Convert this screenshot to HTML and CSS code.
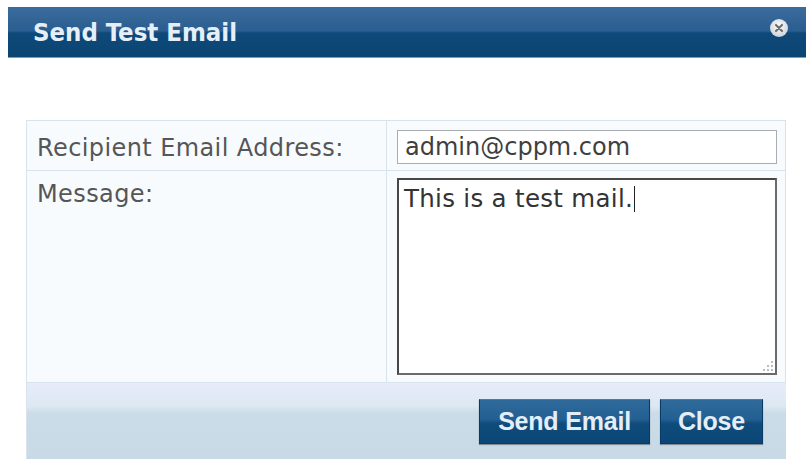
FILE: index.html
```html
<!DOCTYPE html>
<html>
<head>
    <meta charset="utf-8">
    <title>Send Test Email</title>
    <link rel="stylesheet" href="styles.css">
</head>
<body>
    <div class="dialog">
        <div class="dialog-title">
            <span class="dialog-caption">Send Test Email</span>
            <span class="dialog-close" title="Close">
                <svg width="20" height="20" viewBox="0 0 20 20">
                    <defs>
                        <radialGradient id="knob" cx="50%" cy="40%" r="60%">
                            <stop offset="0" stop-color="#ffffff" />
                            <stop offset="1" stop-color="#cdd3da" />
                        </radialGradient>
                    </defs>
                    <circle cx="10" cy="10" r="9" fill="url(#knob)" />
                    <path d="M7 7 L13 13 M13 7 L7 13" stroke="#707070" stroke-width="2.2" stroke-linecap="round" />
                </svg>
            </span>
        </div>
        <div class="dialog-body">
            <table class="form-table" cellspacing="0" cellpadding="0">
                <tr class="row-email">
                    <td class="form-label">Recipient Email Address:</td>
                    <td class="form-field"><div class="text-input">admin@cppm.com</div></td>
                </tr>
                <tr class="row-message">
                    <td class="form-label">Message:</td>
                    <td class="form-field">
                        <div class="text-area">This is a test mail.<span class="caret"></span>
                            <svg class="grip" width="12" height="12" viewBox="0 0 12 12">
                                <rect x="9" y="1" width="2" height="2" fill="#b9bcc0" />
                                <rect x="5" y="5" width="2" height="2" fill="#b9bcc0" />
                                <rect x="9" y="5" width="2" height="2" fill="#b9bcc0" />
                                <rect x="1" y="9" width="2" height="2" fill="#b9bcc0" />
                                <rect x="5" y="9" width="2" height="2" fill="#b9bcc0" />
                                <rect x="9" y="9" width="2" height="2" fill="#b9bcc0" />
                            </svg>
                        </div>
                    </td>
                </tr>
            </table>
            <div class="form-footer">
                <button type="button" class="btn-blue btn-send">Send Email</button>
                <button type="button" class="btn-blue">Close</button>
            </div>
        </div>
    </div>
</body>
</html>
```

FILE: styles.css
```css
body {
    margin: 7px 3px 0 8px;
    padding: 0;
    background-color: #ffffff;
}

.dialog {
    width: 798px;
}

/* title bar */
.dialog-title {
    display: flex;
    align-items: center;
    justify-content: space-between;
    height: 51px;
    padding: 0 18px 0 25px;
    box-sizing: border-box;
    background-image: linear-gradient(180deg, #3b6c9c 0, #2a5e90 48%, #0e4979 52%, #0a4573 100%);
    border-bottom: 1px solid #7d9dbb;
}

.dialog-caption {
    font-family: "DejaVu Sans Condensed", "DejaVu Sans", sans-serif;
    font-stretch: condensed;
    font-weight: bold;
    font-size: 25.5px;
    color: #e6eff8;
}

.dialog-close {
    display: flex;
    margin-top: -9px;
    margin-right: -1px;
}

/* form */
.dialog-body {
    padding: 62px 20px 0 18px;
}

.form-table {
    width: 100%;
    border-collapse: collapse;
    background-color: #f7fbfe;
}

.form-table td {
    border: 1px solid #d9e3ee;
    font-family: "DejaVu Sans", sans-serif;
    font-size: 24px;
}

.form-label {
    width: 349px;
    padding: 0 0 0 10px;
    color: #565656;
    letter-spacing: 0.4px;
}

.row-email td {
    height: 44px;
    padding-top: 2px;
}

.row-email .form-label {
    padding-top: 5px;
}

.row-message .form-label {
    vertical-align: top;
    padding-top: 9px;
}

.form-field {
    padding: 0 8px 0 10px;
}

.row-message .form-field {
    padding-top: 7px;
    padding-bottom: 7px;
}

.text-input {
    height: 32px;
    line-height: 32px;
    padding: 0 7px;
    border: 1px solid #a9adb2;
    background-color: #ffffff;
    color: #3f3f3f;
}

.text-area {
    position: relative;
    height: 185px;
    padding: 4px 5px;
    border: 2px solid #474747;
    border-right-color: #6b6b6b;
    border-bottom-color: #6b6b6b;
    background-color: #ffffff;
    color: #333333;
    font-size: 24.5px;
    line-height: 30px;
    letter-spacing: 0.3px;
}

.caret {
    display: inline-block;
    width: 1px;
    height: 26px;
    margin-left: 1px;
    vertical-align: -5px;
    background-color: #222222;
}

.grip {
    position: absolute;
    right: 1px;
    bottom: 1px;
}

/* button bar */
.form-footer {
    display: flex;
    justify-content: flex-end;
    gap: 10px;
    padding: 16px 23px 15px 0;
    background-image: linear-gradient(180deg, #e6ecf8 0, #dde8f3 30%, #cadce7 40%, #c8dae5 100%);
    border-left: 1px solid #d9e3ee;
}

.btn-blue {
    height: 45px;
    padding: 0 17px;
    border: 1px solid #0b3b63;
    border-top-color: #4b7aa6;
    background-image: linear-gradient(180deg, #2f6a9b 0, #235f92 45%, #0f4c7b 55%, #0b4776 100%);
    box-shadow: 0 1px 1px rgba(0,0,0,0.35);
    font-family: "Liberation Sans", Arial, sans-serif;
    font-weight: bold;
    font-size: 25px;
    color: #e4eef8;
    letter-spacing: -0.2px;
    cursor: pointer;
}

.btn-send {
    padding: 0 18px;
}

.btn-blue:hover {
    background-image: linear-gradient(180deg, #3a76a8 0, #2c6a9d 45%, #155685 55%, #114f7f 100%);
}
```
